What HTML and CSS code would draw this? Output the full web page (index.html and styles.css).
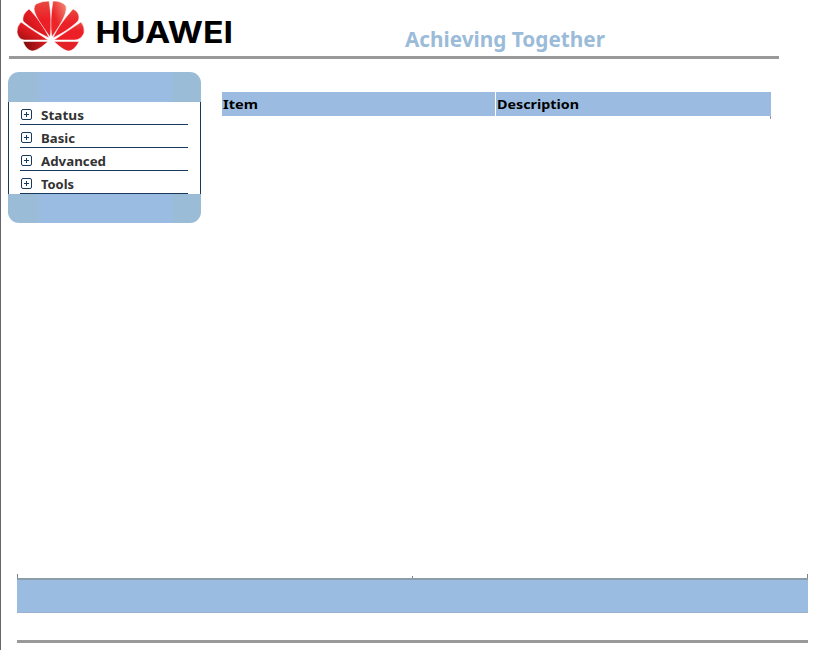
FILE: index.html
```html
<!DOCTYPE html>
<html lang="en">
<head>
<meta charset="utf-8">
<title>HUAWEI</title>
<link rel="stylesheet" href="styles.css">
</head>
<body>
<header class="header">
  <svg class="logo" width="225" height="56" viewBox="0 0 225 56">
    <defs>
      <linearGradient id="left" x1="0" y1="1" x2="1" y2="0"><stop offset="0" stop-color="#9c1010"/><stop offset=".5" stop-color="#e31b22"/><stop offset="1" stop-color="#ee2229"/></linearGradient>
      <linearGradient id="mid" x1="0" y1="0" x2="0" y2="1"><stop offset="0" stop-color="#e94a40"/><stop offset=".5" stop-color="#ec1f27"/></linearGradient>
      <linearGradient id="light" x1="1" y1="0" x2="0" y2="1"><stop offset="0" stop-color="#f0907c"/><stop offset=".6" stop-color="#ec2529"/></linearGradient>
      <linearGradient id="low" x1="0" y1="0" x2="1" y2="0"><stop offset="0" stop-color="#7d0c0c"/><stop offset="1" stop-color="#dd1c21"/></linearGradient>
    </defs>
    <g transform="translate(-9 0)" stroke="#fff" stroke-width=".5">
      <path fill="url(#low)" d="M23 41.5H48C42 47 36 51 32 51Q26 50 23 41.5Z"/>
      <path fill="url(#left)" d="M21 22C29 28 39 34 48 40H24Q18 39 17 32Q17 26 21 22Z"/>
      <path fill="url(#left)" d="M29 9C36 16 45 28 49 38C39 33 29 27 23 21Q22 14 29 9Z"/>
      <path fill="url(#mid)" d="M36 4Q42 1 49 1C51 13 52 26 50 37C44 28 35 17 34 9Q34 6 36 4Z"/>
      <path fill="url(#light)" d="M53 1Q62 1 66 6C68 14 58 28 52 37C50 26 51 13 53 1Z"/>
      <path fill="url(#mid)" d="M73 9C79 12 80 17 78 21C72 27 63 33 53 38C57 28 66 17 73 9Z"/>
      <path fill="url(#mid)" d="M81 22Q85 27 84 33Q81 40 75 40H54C63 34 72 28 81 22Z"/>
      <path fill="#e32126" d="M54 41.5H79Q75 50 69 51C65 51 60 47 54 41.5Z"/>
    </g>
    <text class="wordmark" x="86.5" y="43" textLength="137.5" lengthAdjust="spacingAndGlyphs">HUAWEI</text>
  </svg>
  <svg class="slogan" width="210" height="34"><text x="0" y="26" textLength="200" lengthAdjust="spacingAndGlyphs">Achieving Together</text></svg>
</header>
<div class="content">
  <nav class="sidebar">
    <div class="cap"></div>
    <ul class="menu">
      <li><span class="plus"></span><svg width="140" height="22"><text x="0" y="18" textLength="43" lengthAdjust="spacingAndGlyphs">Status</text></svg></li>
      <li><span class="plus"></span><svg width="140" height="22"><text x="0" y="18" textLength="34" lengthAdjust="spacingAndGlyphs">Basic</text></svg></li>
      <li><span class="plus"></span><svg width="140" height="22"><text x="0" y="18" textLength="65" lengthAdjust="spacingAndGlyphs">Advanced</text></svg></li>
      <li><span class="plus"></span><svg width="140" height="22"><text x="0" y="18" textLength="33" lengthAdjust="spacingAndGlyphs">Tools</text></svg></li>
    </ul>
    <div class="cap bottom"></div>
  </nav>
  <main class="table">
    <div class="cell"><svg width="100" height="24"><text x="1" y="17" textLength="35" lengthAdjust="spacingAndGlyphs">Item</text></svg></div>
    <div class="cell"><svg width="100" height="24"><text x="1" y="17" textLength="82" lengthAdjust="spacingAndGlyphs">Description</text></svg></div>
  </main>
</div>
<footer class="footer"><div class="ticks"><i></i><i></i><i></i></div><div class="bar"></div></footer>
</body>
</html>
```
FILE: styles.css
```css
* { box-sizing: border-box; }
body { margin: 0; height: 650px; overflow: hidden; display: flex; flex-direction: column; background: #fff; border-left: 1px solid #67636f; font: bold 13px "DejaVu Sans", sans-serif; }
svg { display: block; }
.header { width: 770px; height: 59px; margin-left: 8px; border-bottom: 3px solid #999; display: flex; align-items: flex-start; }
.wordmark { font: 700 30px Inter, sans-serif; }
.slogan { margin: 21px 0 0 171px; fill: #9bbcd9; font: bold 21px "Noto Sans", sans-serif; }
.content { display: flex; margin: 13px 0 0 7px; height: 502px; align-items: flex-start; }
.sidebar { width: 193px; }
.cap { height: 30px; border-radius: 11px 11px 0 0; background: linear-gradient(90deg, #9bbcd7 14%, #9abce2 18%, #9abce2 83%, #9bbcd7 87%); }
.cap.bottom { height: 29px; border-radius: 0 0 11px 11px; }
.menu { list-style: none; margin: 0; padding: 0 12px 0 11px; height: 92px; border: solid #173a5c; border-width: 0 1px; color: #333; fill: #333; font: bold 13px "Noto Sans", sans-serif; }
.menu li { height: 23px; display: flex; align-items: flex-start; border-bottom: 1px solid #173a5c; }
.menu svg { margin-left: 9px; }
.plus { width: 11px; height: 11px; margin: 7px 0 0 1px; border: 1px solid #173a5c; border-radius: 2px; background: linear-gradient(#173a5c, #173a5c) center / 5px 1px no-repeat, linear-gradient(#173a5c, #173a5c) center / 1px 5px no-repeat; }
.table { width: 549px; margin: 20px 0 0 21px; display: grid; grid-template-columns: 273px 275px; gap: 1px; position: relative; }
.table::after { content: ""; position: absolute; right: 0; top: 24px; width: 1px; height: 3px; background: #8799aa; }
.cell { height: 24px; background: #9bbce0; font: bold 13px "Noto Sans", sans-serif; }
.footer { width: 791px; height: 69px; margin-left: 16px; border-bottom: 3px solid #999; }
.ticks { height: 4px; display: flex; justify-content: space-between; align-items: flex-end; }
.ticks i { width: 1px; height: 4px; background: #718596; }
.ticks i:nth-child(2) { height: 2px; }
.bar { height: 35px; border-top: 2px solid #8b9caa; border-bottom: 1px solid #9bb1ce; background: #9abce1; }
```
